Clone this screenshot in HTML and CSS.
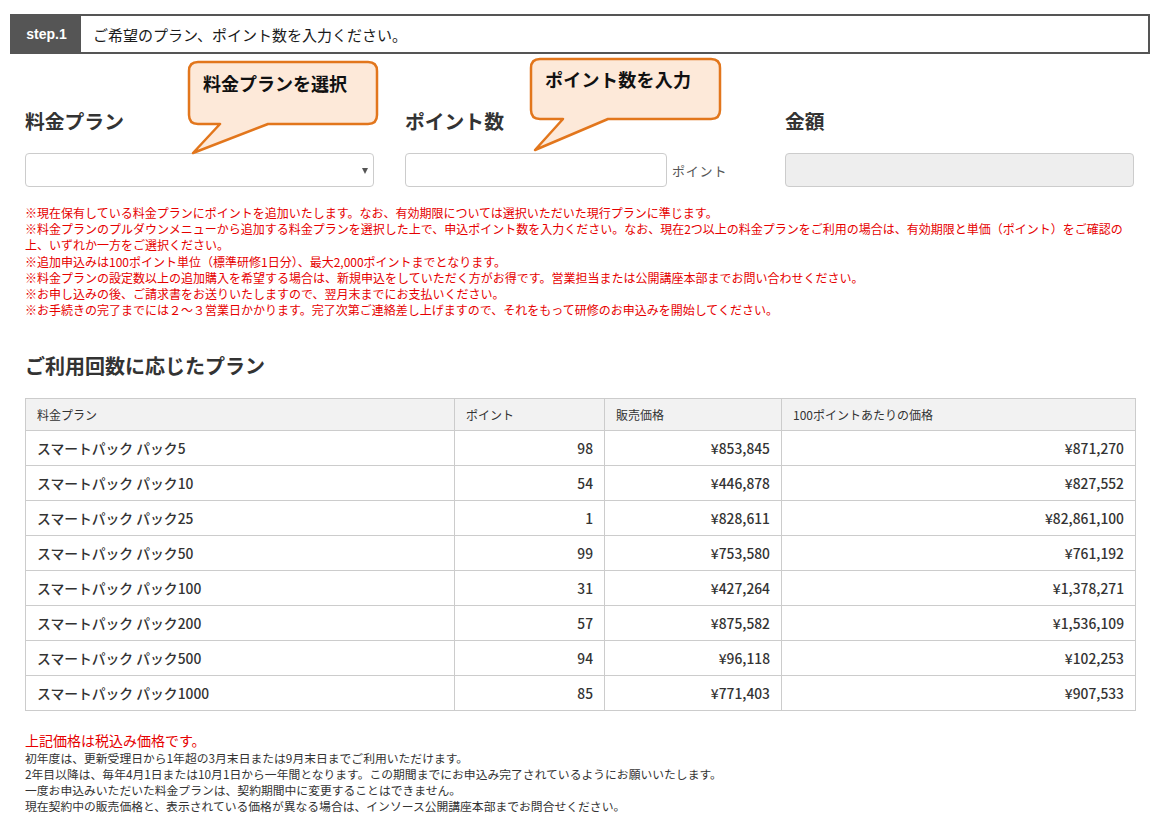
FILE: index.html
```html
<!DOCTYPE html>
<html lang="ja">
<head>
<meta charset="utf-8">
<title>step.1</title>
<link rel="stylesheet" href="styles.css">
</head>
<body>
<div class="page">
  <div class="step">
    <div class="step-label">step.1</div>
    <div class="step-text">ご希望のプラン、ポイント数を入力ください。</div>
  </div>

  <div class="form">
    <div class="field">
      <div class="field-label">料金プラン</div>
      <div class="select"><span class="arrow"></span></div>
    </div>
    <div class="field">
      <div class="field-label">ポイント数</div>
      <div class="input-row">
        <div class="input"></div>
        <span class="unit">ポイント</span>
      </div>
    </div>
    <div class="field">
      <div class="field-label">金額</div>
      <div class="input input-disabled"></div>
    </div>
  </div>

  <div class="notes">
    <p>※現在保有している料金プランにポイントを追加いたします。なお、有効期限については選択いただいた現行プランに準じます。</p>
    <p>※料金プランのプルダウンメニューから追加する料金プランを選択した上で、申込ポイント数を入力ください。なお、現在2つ以上の料金プランをご利用の場合は、有効期限と単価（ポイント）をご確認の上、いずれか一方をご選択ください。</p>
    <p>※追加申込みは100ポイント単位（標準研修1日分）、最大2,000ポイントまでとなります。</p>
    <p>※料金プランの設定数以上の追加購入を希望する場合は、新規申込をしていただく方がお得です。営業担当または公開講座本部までお問い合わせください。</p>
    <p>※お申し込みの後、ご請求書をお送りいたしますので、翌月末までにお支払いください。</p>
    <p>※お手続きの完了までには２～３営業日かかります。完了次第ご連絡差し上げますので、それをもって研修のお申込みを開始してください。</p>
  </div>

  <h2 class="section-title">ご利用回数に応じたプラン</h2>

  <table class="plans">
    <thead>
      <tr>
        <th class="c1">料金プラン</th>
        <th class="c2">ポイント</th>
        <th class="c3">販売価格</th>
        <th class="c4">100ポイントあたりの価格</th>
      </tr>
    </thead>
    <tbody>
      <tr><td>スマートパック パック5</td><td class="num">98</td><td class="num">¥853,845</td><td class="num">¥871,270</td></tr>
      <tr><td>スマートパック パック10</td><td class="num">54</td><td class="num">¥446,878</td><td class="num">¥827,552</td></tr>
      <tr><td>スマートパック パック25</td><td class="num">1</td><td class="num">¥828,611</td><td class="num">¥82,861,100</td></tr>
      <tr><td>スマートパック パック50</td><td class="num">99</td><td class="num">¥753,580</td><td class="num">¥761,192</td></tr>
      <tr><td>スマートパック パック100</td><td class="num">31</td><td class="num">¥427,264</td><td class="num">¥1,378,271</td></tr>
      <tr><td>スマートパック パック200</td><td class="num">57</td><td class="num">¥875,582</td><td class="num">¥1,536,109</td></tr>
      <tr><td>スマートパック パック500</td><td class="num">94</td><td class="num">¥96,118</td><td class="num">¥102,253</td></tr>
      <tr><td>スマートパック パック1000</td><td class="num">85</td><td class="num">¥771,403</td><td class="num">¥907,533</td></tr>
    </tbody>
  </table>

  <div class="footer-notes">
    <p class="tax">上記価格は税込み価格です。</p>
    <p>初年度は、更新受理日から1年超の3月末日または9月末日までご利用いただけます。</p>
    <p>2年目以降は、毎年4月1日または10月1日から一年間となります。この期間までにお申込み完了されているようにお願いいたします。</p>
    <p>一度お申込みいただいた料金プランは、契約期間中に変更することはできません。</p>
    <p>現在契約中の販売価格と、表示されている価格が異なる場合は、インソース公開講座本部までお問合せください。</p>
  </div>

  <div class="callout callout-plan">
    <svg class="callout-shape" width="196" height="100" viewBox="0 0 196 100">
      <path d="M12 4 H182 Q191 4 191 13 V57 Q191 66 182 66 H82 L7 95 L34 66 H12 Q3 66 3 57 V13 Q3 4 12 4 Z"/>
    </svg>
    <span class="callout-text">料金プランを選択</span>
  </div>

  <div class="callout callout-point">
    <svg class="callout-shape" width="196" height="100" viewBox="0 0 196 100">
      <path d="M12 3 H183 Q192 3 192 12 V54 Q192 63 183 63 H80 L7 94 L35 63 H12 Q3 63 3 54 V12 Q3 3 12 3 Z"/>
    </svg>
    <span class="callout-text spaced">ポイント数を入力</span>
  </div>
</div>
</body>
</html>
```

FILE: styles.css
```css
* {
  box-sizing: border-box;
}

html, body {
  margin: 0;
  padding: 0;
  background: #ffffff;
}

body {
  font-family: "Noto Sans CJK JP", "Noto Sans", sans-serif;
  color: #333333;
}

.page {
  position: relative;
  width: 1164px;
  padding: 14px 0 0 0;
}

p {
  margin: 0;
}

/* step header */
.step {
  margin-left: 10px;
  width: 1140px;
  height: 40px;
  border: 2px solid #555555;
  display: flex;
  align-items: stretch;
}

.step-label {
  background: #555555;
  color: #ffffff;
  font-family: "Liberation Sans", Arial, sans-serif;
  font-weight: 700;
  font-size: 14px;
  width: 69px;
  display: flex;
  align-items: center;
  justify-content: center;
}

.step-text {
  display: flex;
  align-items: center;
  padding-left: 12px;
  font-size: 15px;
  color: #1a1a1a;
}

/* form */
.form {
  margin: 52px 0 0 25px;
  display: grid;
  grid-template-columns: 349px 349px 349px;
  column-gap: 31px;
}

.field-label {
  font-size: 19.8px;
  font-weight: 700;
  line-height: 30px;
  color: #333333;
  margin-bottom: 17px;
}

.select,
.input {
  position: relative;
  height: 34px;
  border: 1px solid #cccccc;
  border-radius: 4px;
  background: #ffffff;
}

.select .arrow {
  position: absolute;
  right: 5px;
  top: 14px;
  width: 0;
  height: 0;
  border-left: 3.5px solid transparent;
  border-right: 3.5px solid transparent;
  border-top: 6px solid #555555;
}

.input-row {
  display: flex;
  align-items: center;
}

.input-row .input {
  width: 262px;
}

.unit {
  margin-left: 5px;
  font-size: 13px;
  letter-spacing: 0.8px;
  color: #555555;
}

.input-disabled {
  background: #eeeeee;
}

/* red notes */
.notes {
  margin: 18px 0 0 25px;
  width: 1110px;
  color: #e60000;
  font-size: 12px;
  line-height: 16.2px;
}

.section-title {
  margin: 33px 0 0 25px;
  font-size: 20px;
  font-weight: 700;
  line-height: 30px;
  color: #333333;
}

/* table */
.plans {
  margin: 17px 0 0 25px;
  width: 1110px;
  border-collapse: collapse;
  table-layout: fixed;
}

.plans th,
.plans td {
  border: 1px solid #cccccc;
  padding: 0 11px;
}

.plans th {
  background: #f2f2f2;
  height: 32px;
  font-size: 12px;
  font-weight: 400;
  text-align: left;
  color: #333333;
}

.plans td {
  height: 35px;
  font-size: 13.8px;
  font-weight: 500;
  color: #333333;
}

.plans .c1 { width: 429px; }
.plans .c2 { width: 150px; }
.plans .c3 { width: 177px; }
.plans .c4 { width: 354px; }

.plans td.num {
  text-align: right;
}

/* footer notes */
.footer-notes {
  margin: 20px 0 0 25px;
  font-size: 11.8px;
  line-height: 16px;
  color: #333333;
}

.footer-notes .tax {
  color: #e60000;
  font-size: 14px;
  line-height: 19px;
}

/* callouts (overlays) */
.callout {
  position: absolute;
  width: 196px;
  height: 100px;
}

.callout-plan {
  left: 186px;
  top: 58px;
}

.callout-point {
  left: 528px;
  top: 56px;
}

.callout-shape {
  position: absolute;
  left: 0;
  top: 0;
}

.callout-shape path {
  fill: #fde9d9;
  stroke: #e2761c;
  stroke-width: 2.5;
  stroke-linejoin: round;
}

.callout-text {
  position: absolute;
  left: 17px;
  top: 12px;
  font-size: 18px;
  font-weight: 700;
  color: #111111;
  white-space: nowrap;
}

.callout-point .callout-text {
  left: 17px;
  top: 10px;
}

.callout-text.spaced {
  letter-spacing: 0.3px;
}
```
